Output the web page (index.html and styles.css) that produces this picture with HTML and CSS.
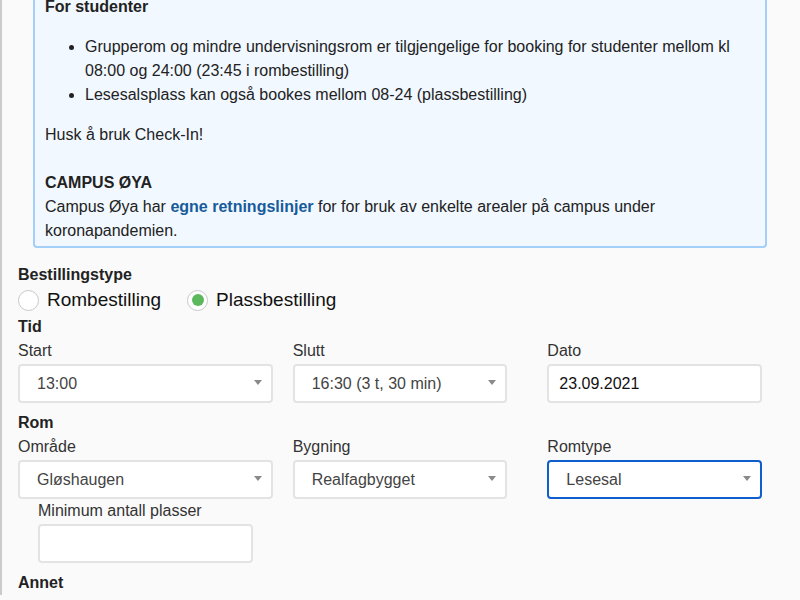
FILE: index.html
```html
<!DOCTYPE html>
<html lang="no">
<head>
<meta charset="utf-8">
<title>Booking</title>
<link rel="stylesheet" href="styles.css">
</head>
<body>
<div class="page">
  <div class="form">
    <div class="info">
      <p class="info-title"><strong>For studenter</strong></p>
      <ul class="info-list">
        <li>Grupperom og mindre undervisningsrom er tilgjengelige for booking for studenter mellom kl 08:00 og 24:00 (23:45 i rombestilling)</li>
        <li>Lesesalsplass kan også bookes mellom 08-24 (plassbestilling)</li>
      </ul>
      <p class="info-p">Husk å bruk Check-In!</p>
      <p class="info-p campus"><strong>CAMPUS ØYA</strong><br>Campus Øya har <a class="link" href="#">egne retningslinjer</a> for for bruk av enkelte arealer på campus under koronapandemien.</p>
    </div>

    <div class="heading first">Bestillingstype</div>
    <div class="radios">
      <label class="radio"><span class="circle"></span><span class="radio-text">Rombestilling</span></label>
      <label class="radio"><span class="circle checked"><span class="dot"></span></span><span class="radio-text">Plassbestilling</span></label>
    </div>

    <div class="heading tight">Tid</div>
    <div class="grid">
      <div class="cell cell-first">
        <div class="label">Start</div>
        <div class="control select"><span class="value">13:00</span><span class="arrow"></span></div>
      </div>
      <div class="cell">
        <div class="label">Slutt</div>
        <div class="control select"><span class="value">16:30 (3 t, 30 min)</span><span class="arrow"></span></div>
      </div>
      <div class="cell">
        <div class="label">Dato</div>
        <div class="control input"><span class="date">23.09.2021</span></div>
      </div>
    </div>

    <div class="heading">Rom</div>
    <div class="grid">
      <div class="cell cell-first">
        <div class="label">Område</div>
        <div class="control select"><span class="value">Gløshaugen</span><span class="arrow"></span></div>
      </div>
      <div class="cell">
        <div class="label">Bygning</div>
        <div class="control select"><span class="value">Realfagbygget</span><span class="arrow"></span></div>
      </div>
      <div class="cell">
        <div class="label">Romtype</div>
        <div class="control select focused"><span class="value">Lesesal</span><span class="arrow"></span></div>
      </div>
      <div class="cell">
        <div class="label">Minimum antall plasser</div>
        <div class="control input"></div>
      </div>
    </div>

    <div class="heading">Annet</div>
  </div>
</div>
</body>
</html>
```
FILE: styles.css
```css
html, body {
  margin: 0;
  padding: 0;
  height: 100%;
  overflow: hidden;
  background: #fafafa;
}

body {
  font-family: "Liberation Sans", Arial, Helvetica, sans-serif;
  font-size: 16px;
  line-height: 24px;
  color: #222;
}

.page {
  border-left: 2px solid #cbcbcb;
  min-height: 100%;
  box-sizing: border-box;
  padding: 0 18px 0 16px;
}

.form {
  width: 764px;
  margin-top: -15px;
}

.info {
  margin: 0 15px;
  background: #f1f8ff;
  border: 2px solid #a3cff9;
  border-radius: 4px;
  padding: 8px 10px 3px 10px;
}

.info-title {
  margin: 0;
}

.info-list {
  margin: 16px 0;
  padding-left: 40px;
}

.info-p {
  margin: 0;
}

.campus {
  margin-top: 24px;
}

.link {
  color: #175b9b;
  font-weight: bold;
  text-decoration: none;
}

.heading {
  font-weight: bold;
  color: #222;
  margin-top: 8px;
}

.heading.first {
  margin-top: 15px;
}

.heading.tight {
  margin-top: 2px;
}

.radios {
  display: flex;
  align-items: center;
  height: 26px;
  gap: 26px;
}

.radio {
  display: flex;
  align-items: center;
  gap: 8px;
  font-size: 19px;
  color: #111;
}

.circle {
  width: 19px;
  height: 19px;
  border: 1px solid #c8c8c8;
  border-radius: 50%;
  background: #fff;
  display: flex;
  align-items: center;
  justify-content: center;
}

.dot {
  width: 12px;
  height: 12px;
  border-radius: 50%;
  background: #5cb85c;
}

.grid {
  display: grid;
  grid-template-columns: repeat(3, 1fr);
}

.cell {
  padding: 0 20px;
}

.cell.cell-first {
  padding: 0;
}

.label {
  color: #333;
}

.control {
  margin-top: 1px;
  height: 39px;
  box-sizing: border-box;
  background: #fff;
  border: 2px solid #e3e3e3;
  border-radius: 4px;
  display: flex;
  align-items: center;
}

.select {
  justify-content: space-between;
  padding: 0 9px 0 17px;
}

.select.focused {
  border-color: #0f5ecd;
}

.value {
  color: #444;
}

.arrow {
  width: 0;
  height: 0;
  border-left: 4px solid transparent;
  border-right: 4px solid transparent;
  border-top: 5px solid #8a8a8a;
  margin-top: -3px;
}

.input {
  padding: 0 10px;
}

.date {
  color: #111;
}
```
